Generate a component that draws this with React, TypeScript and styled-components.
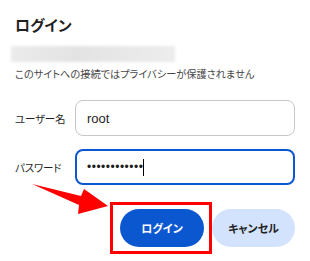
import React from "react";
import styled, { createGlobalStyle } from "styled-components";

const GlobalStyle = createGlobalStyle`
  html, body {
    margin: 0;
    padding: 0;
    background: #ffffff;
  }
  body {
    font-family: "Noto Sans CJK JP", "Noto Sans", sans-serif;
    font-feature-settings: "palt";
    color: #1f1f1f;
  }
`;

const Dialog = styled.div`
  position: relative;
  width: 310px;
  height: 261px;
  box-sizing: border-box;
  padding: 14px 15px 0 15px;
  overflow: hidden;
`;

const Title = styled.h1`
  margin: 0;
  font-size: 15px;
  font-weight: 700;
  line-height: 22px;
`;

const BlurredUrl = styled.div`
  margin: 10px 0 0 -4px;
  width: 164px;
  height: 16px;
  background: linear-gradient(90deg, #ebebeb 0%, #e3e3e3 40%, #e8e8e8 70%, #ececec 100%);
  filter: blur(1.5px);
`;

const Notice = styled.p`
  margin: 4px 0 0 0;
  font-size: 10.2px;
  line-height: 16px;
  color: #474747;
`;

const Form = styled.div`
  display: flex;
  flex-direction: column;
  gap: 13px;
  margin-top: 18px;
`;

const Row = styled.div`
  display: flex;
  align-items: center;
`;

const Label = styled.label`
  width: 60px;
  font-size: 10.5px;
  letter-spacing: -0.2px;
  color: #1f1f1f;
`;

const Field = styled.div<{ $focused?: boolean }>`
  flex: 0 0 auto;
  width: 220px;
  height: 36px;
  box-sizing: border-box;
  display: flex;
  align-items: center;
  padding-left: ${(p) => (p.$focused ? "10px" : "11px")};
  border: ${(p) => (p.$focused ? "2px solid #0b57d0" : "1px solid #c7c7c7")};
  border-radius: 8px;
  font-family: "Liberation Sans", Arial, sans-serif;
  font-size: 13px;
  color: #1f1f1f;
`;

const Dots = styled.span`
  letter-spacing: 0.5px;
  font-size: 12px;
`;

const Caret = styled.span`
  display: inline-block;
  width: 1px;
  height: 17px;
  margin-left: 0;
  background: #000000;
`;

const Actions = styled.div`
  display: flex;
  justify-content: flex-end;
  align-items: center;
  margin-top: 17px;
`;

const Highlight = styled.div`
  border: 3px solid #ff0000;
  padding: 4px 5px 4px 7px;
`;

const Button = styled.button<{ $primary?: boolean }>`
  height: 38px;
  width: ${(p) => (p.$primary ? "84px" : "83px")};
  border: none;
  border-radius: 19px;
  font-family: "Noto Sans CJK JP", sans-serif;
  font-feature-settings: "palt";
  font-size: 11px;
  font-weight: 700;
  background: ${(p) => (p.$primary ? "#0b57d0" : "#d3e3fd")};
  color: ${(p) => (p.$primary ? "#ffffff" : "#1f1f1f")};
  padding: 0;
`;

const ArrowMark = styled.svg`
  position: absolute;
  left: 0;
  top: 0;
  pointer-events: none;
`;

export default function App() {
  return (
    <>
      <GlobalStyle />
      <Dialog>
        <Title>ログイン</Title>
        <BlurredUrl />
        <Notice>このサイトへの接続ではプライバシーが保護されません</Notice>
        <Form>
          <Row>
            <Label>ユーザー名</Label>
            <Field>root</Field>
          </Row>
          <Row>
            <Label>パスワード</Label>
            <Field $focused>
              <Dots>••••••••••••</Dots>
              <Caret />
            </Field>
          </Row>
        </Form>
        <Actions>
          <Highlight>
            <Button $primary>ログイン</Button>
          </Highlight>
          <Button>キャンセル</Button>
        </Actions>
        <ArrowMark width="310" height="261" viewBox="0 0 310 261">
          <polygon
            points="32,184 81,196 84,189 108,206 78,214 79,205"
            fill="#ff0000"
          />
        </ArrowMark>
      </Dialog>
    </>
  );
}
